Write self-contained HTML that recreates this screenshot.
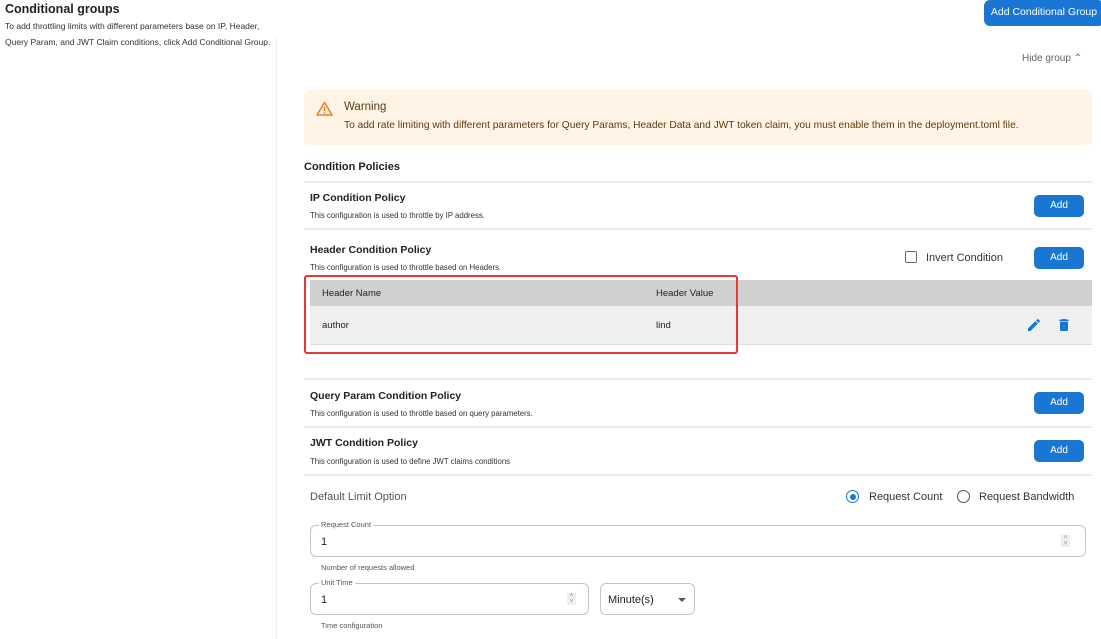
<!DOCTYPE html>
<html><head><meta charset="utf-8"><style>
*{margin:0;padding:0;box-sizing:border-box}
body{width:1101px;height:639px;overflow:hidden;background:#fff;font-family:"Liberation Sans",sans-serif;color:#222;position:relative}
.a{position:absolute;white-space:nowrap}
.btn{position:absolute;background:#1976d2;color:#fff;border-radius:5px;font-size:10px;text-align:center;line-height:22px;width:50px;height:22px}
.hr{position:absolute;left:304px;width:788px;height:2px;background:#ececec}
.t{font-size:10.5px;font-weight:bold;color:#222}
.d{font-size:7.8px;color:#333}
.fld{position:absolute;border:1px solid #c4c4c4;border-radius:6px}
.lg{position:absolute;font-size:7.5px;color:#555;background:#fff;padding:0 2px;top:-6px;left:8px}
.sp{position:absolute;width:9px;height:12px;background:#eee;font-size:6px;color:#888;text-align:center;line-height:6px}
</style></head><body>
<div class="a" style="left:5px;top:2px;font-size:12.5px;font-weight:bold">Conditional groups</div>
<div class="a" style="left:5px;top:18px;font-size:8.5px;color:#333;line-height:16px">To add throttling limits with different parameters base on IP, Header,<br>Query Param, and JWT Claim conditions, click Add Conditional Group.</div>
<div class="a" style="left:276px;top:38px;width:1px;height:601px;background:#eee"></div>
<div class="a" style="left:984px;top:0;width:120px;height:26px;background:#1976d2;color:#fff;border-radius:6px;font-size:10.5px;line-height:25px;text-align:center">Add Conditional Group</div>
<div class="a" style="left:1022px;top:53px;font-size:10px;color:#666">Hide group <span style="font-size:10px">&#8963;</span></div>
<div class="a" style="left:304px;top:90px;width:788px;height:55px;background:#fff4e5;border-radius:5px"></div>
<svg class="a" style="left:316px;top:101px" width="17" height="15" viewBox="0 0 17 15"><path d="M8.5 1.5L16 14H1z" fill="none" stroke="#f07c23" stroke-width="1.5" stroke-linejoin="round"/><path d="M8.5 5.5v4.5M8.5 11.3v1.2" stroke="#f07c23" stroke-width="1.5"/></svg>
<div class="a" style="left:344px;top:101px;font-size:11.5px;color:#5f3a12">Warning</div>
<div class="a" style="left:344px;top:120px;font-size:10.2px;color:#5f3a12">To add rate limiting with different parameters for Query Params, Header Data and JWT token claim, you must enable them in the deployment.toml file.</div>
<div class="a" style="left:304px;top:161px;font-size:11px;font-weight:bold">Condition Policies</div>
<div class="hr" style="top:181px"></div>
<div class="a t" style="left:310px;top:192px">IP Condition Policy</div>
<div class="a d" style="left:310px;top:211px">This configuration is used to throttle by IP address.</div>
<div class="btn" style="left:1034px;top:195px">Add</div>
<div class="hr" style="top:228px"></div>
<div class="a t" style="left:310px;top:244px">Header Condition Policy</div>
<div class="a d" style="left:310px;top:263px">This configuration is used to throttle based on Headers.</div>
<div class="a" style="left:905px;top:251px;width:12px;height:12px;border:1.5px solid #666;border-radius:2px"></div>
<div class="a" style="left:926px;top:252px;font-size:11px;color:#333">Invert Condition</div>
<div class="btn" style="left:1034px;top:247px">Add</div>
<div class="a" style="left:310px;top:280px;width:782px;height:26px;background:#d0d0d0"></div>
<div class="a" style="left:310px;top:306px;width:782px;height:39px;background:#efefef;border-bottom:1px solid #ddd"></div>
<div class="a" style="left:322px;top:288px;font-size:9.5px;color:#222">Header Name</div>
<div class="a" style="left:656px;top:288px;font-size:9.5px;color:#222">Header Value</div>
<div class="a" style="left:322px;top:320px;font-size:9.5px;color:#222">author</div>
<div class="a" style="left:656px;top:320px;font-size:9.5px;color:#222">lind</div>
<svg class="a" style="left:1026px;top:317px" width="16" height="16" viewBox="0 0 24 24"><path fill="#1976d2" d="M3 17.25V21h3.75L17.81 9.94l-3.75-3.75L3 17.25zM20.71 7.04a1 1 0 000-1.41l-2.34-2.34a1 1 0 00-1.41 0l-1.83 1.83 3.75 3.75 1.83-1.83z"/></svg>
<svg class="a" style="left:1056px;top:317px" width="16" height="16" viewBox="0 0 24 24"><path fill="#1976d2" d="M6 19c0 1.1.9 2 2 2h8c1.1 0 2-.9 2-2V7H6v12zM19 4h-3.5l-1-1h-5l-1 1H5v2h14V4z"/></svg>
<div class="a" style="left:304px;top:275px;width:434px;height:79px;border:2px solid #e53935;border-radius:3px"></div>
<div class="hr" style="top:378px"></div>
<div class="a t" style="left:310px;top:390px">Query Param Condition Policy</div>
<div class="a d" style="left:310px;top:409px">This configuration is used to throttle based on query parameters.</div>
<div class="btn" style="left:1034px;top:392px">Add</div>
<div class="hr" style="top:426px"></div>
<div class="a t" style="left:310px;top:437px">JWT Condition Policy</div>
<div class="a d" style="left:310px;top:457px">This configuration is used to define JWT claims conditions</div>
<div class="btn" style="left:1034px;top:440px">Add</div>
<div class="hr" style="top:474px"></div>
<div class="a" style="left:310px;top:491px;font-size:11px;color:#555">Default Limit Option</div>
<div class="a" style="left:846px;top:490px;width:13px;height:13px;border:1.5px solid #1976d2;border-radius:50%"></div>
<div class="a" style="left:849.5px;top:493.5px;width:6px;height:6px;background:#1976d2;border-radius:50%"></div>
<div class="a" style="left:869px;top:491px;font-size:11px;color:#333">Request Count</div>
<div class="a" style="left:957px;top:490px;width:13px;height:13px;border:1.5px solid #555;border-radius:50%"></div>
<div class="a" style="left:979px;top:491px;font-size:11px;color:#333">Request Bandwidth</div>
<div class="fld" style="left:310px;top:525px;width:776px;height:32px"><div class="lg">Request Count</div><div class="a" style="left:10px;top:10px;font-size:11px">1</div><div class="sp" style="left:750px;top:9px">&#708;<br>&#709;</div></div>
<div class="a" style="left:321px;top:563px;font-size:7.5px;color:#555">Number of requests allowed</div>
<div class="fld" style="left:310px;top:583px;width:279px;height:32px"><div class="lg">Unit Time</div><div class="a" style="left:10px;top:10px;font-size:11px">1</div><div class="sp" style="left:256px;top:9px">&#708;<br>&#709;</div></div>
<div class="fld" style="left:600px;top:583px;width:95px;height:32px"><div class="a" style="left:7px;top:10px;font-size:11px;color:#222">Minute(s)</div><div class="a" style="left:77px;top:14px;width:0;height:0;border-left:4px solid transparent;border-right:4px solid transparent;border-top:4px solid #555"></div></div>
<div class="a" style="left:321px;top:621px;font-size:7.5px;color:#555">Time configuration</div>
</body></html>
